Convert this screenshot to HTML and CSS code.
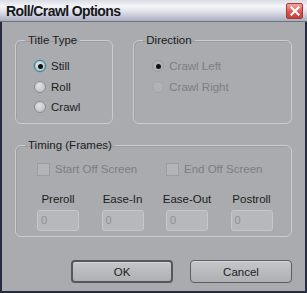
FILE: index.html
```html
<!DOCTYPE html>
<html lang="en">
<head>
    <meta charset="UTF-8">
    <title>Roll/Crawl Options</title>
    <link rel="stylesheet" href="styles.css">
</head>
<body>
    <div class="window">
        <!-- Заголовок окна -->
        <div class="titlebar">
            <span class="title">Roll/Crawl Options</span>
            <span class="close">
                <svg width="10" height="10" viewBox="0 0 10 10">
                    <path d="M1.5 1.5 L8.5 8.5 M8.5 1.5 L1.5 8.5" stroke="#fff" stroke-width="2.2" stroke-linecap="square"/>
                </svg>
            </span>
        </div>

        <div class="content">
            <div class="top-row">
                <fieldset class="group group-type">
                    <legend>Title Type</legend>
                    <div class="option"><span class="radio checked"></span>Still</div>
                    <div class="option"><span class="radio"></span>Roll</div>
                    <div class="option"><span class="radio"></span>Crawl</div>
                </fieldset>

                <fieldset class="group group-dir">
                    <legend>Direction</legend>
                    <div class="option disabled"><span class="radio checked"></span>Crawl Left</div>
                    <div class="option disabled"><span class="radio"></span>Crawl Right</div>
                </fieldset>
            </div>

            <fieldset class="group group-timing">
                <legend>Timing (Frames)</legend>
                <div class="timing-grid">
                    <div class="check-row disabled"><span class="checkbox"></span>Start Off Screen</div>
                    <div class="check-row disabled"><span class="checkbox"></span>End Off Screen</div>

                    <div class="field"><span class="field-label">Preroll</span><span class="num">0</span></div>
                    <div class="field"><span class="field-label">Ease-In</span><span class="num">0</span></div>
                    <div class="field"><span class="field-label">Ease-Out</span><span class="num">0</span></div>
                    <div class="field"><span class="field-label">Postroll</span><span class="num">0</span></div>
                </div>
            </fieldset>

            <div class="buttons">
                <button class="btn btn-default">OK</button>
                <button class="btn">Cancel</button>
            </div>
        </div>
    </div>
</body>
</html>
```

FILE: styles.css
```css
/* Основа */
body {
    margin: 0;
    background: #a9abaf;
    font-family: 'Liberation Sans', Arial, sans-serif;
    font-size: 11px;
    color: #1c1d20;
}

.window {
    width: 307px;
    height: 293px;
    display: flex;
    flex-direction: column;
}

/* Заголовок */
.titlebar {
    height: 21px;
    display: flex;
    align-items: center;
    justify-content: space-between;
    padding: 0 4px 0 6px;
    background: linear-gradient(#d9dce4 0%, #f4f5f8 30%, #dfe2ea 55%, #a9aebf 100%);
    border-bottom: 1px solid #6d7280;
}

.title {
    font-size: 14px;
    font-weight: bold;
    letter-spacing: -0.6px;
    color: #17181c;
}

.close {
    width: 15px;
    height: 14px;
    display: flex;
    align-items: center;
    justify-content: center;
    background: linear-gradient(#f3a5a1, #d9504b 60%, #c8403b);
    border: 1px solid #a33a36;
    border-radius: 2px;
}

/* Тело окна */
.content {
    flex: 1;
    border: 2px solid #262b3d;
    border-top: none;
    padding: 11px 13px 0;
    display: flex;
    flex-direction: column;
}

.top-row {
    display: flex;
    gap: 20px;
}

/* Группы */
.group {
    margin: 0;
    border: 1px solid #cbccd0;
    border-radius: 6px;
    box-shadow: inset 1px 1px 0 #9c9ea2;
    padding: 9px 0 0 18px;
}

.group legend {
    margin-left: -9px;
    padding: 0 3px;
    line-height: 14px;
    font-size: 11.5px;
}

.group-type {
    width: 99px;
    height: 91px;
    box-sizing: border-box;
}

.group-dir {
    width: 160px;
    height: 91px;
    box-sizing: border-box;
}

.option {
    display: flex;
    align-items: center;
    gap: 5px;
    height: 20.5px;
    font-size: 11.5px;
}

.option.disabled,
.check-row.disabled {
    color: #7c7e82;
}

/* Радиокнопки */
.radio {
    width: 10px;
    height: 10px;
    border-radius: 50%;
    border: 1px solid #8a8c90;
    background: radial-gradient(circle at 40% 35%, #e2e3e5, #b5b7ba);
    display: flex;
    align-items: center;
    justify-content: center;
}

.radio.checked {
    border-color: #2f7f9e;
    box-shadow: 0 0 0 0.5px #5fa6c2;
}

.radio.checked::after {
    content: '';
    width: 5px;
    height: 5px;
    border-radius: 50%;
    background: #111;
}

.disabled .radio {
    border-color: #a2a4a8;
    background: #b0b2b5;
}

.disabled .radio.checked {
    box-shadow: none;
    border-color: #9a9ca0;
}

/* Тайминг */
.group-timing {
    margin-top: 14px;
    height: 99px;
    box-sizing: border-box;
    padding: 10px 0 0 21px;
}

.group-timing legend {
    margin-left: -12px;
}

.timing-grid {
    display: grid;
    grid-template-columns: repeat(4, 42px);
    column-gap: 22.5px;
}

.check-row {
    grid-column: span 2;
    display: flex;
    align-items: center;
    gap: 5px;
    height: 14px;
    font-size: 11.5px;
}

.checkbox {
    width: 11px;
    height: 11px;
    border: 1px solid #9a9ca0;
    background: #b2b4b7;
}

.field {
    margin-top: 16px;
    display: flex;
    flex-direction: column;
    align-items: center;
    gap: 4px;
}

.field-label {
    font-size: 11.5px;
    line-height: 14px;
    white-space: nowrap;
}

.num {
    width: 42px;
    height: 21px;
    box-sizing: border-box;
    border: 1px solid #c6c7ca;
    border-radius: 3px;
    background: #b6b8bb;
    color: #8e9094;
    padding: 3px 0 0 3px;
    font-size: 11px;
}

/* Кнопки */
.buttons {
    display: flex;
    gap: 17px;
    padding: 23px 0 0 56px;
}

.btn {
    width: 104px;
    height: 23px;
    font-family: inherit;
    font-size: 11.5px;
    color: #1c1d20;
    border: 1px solid #5c5e63;
    border-radius: 4px;
    background: linear-gradient(#c4c6c9, #aeb0b4);
    box-shadow: inset 0 1px 0 #d6d7da;
    padding: 0;
}

.btn-default {
    border: 2px solid #55575c;
}
```
